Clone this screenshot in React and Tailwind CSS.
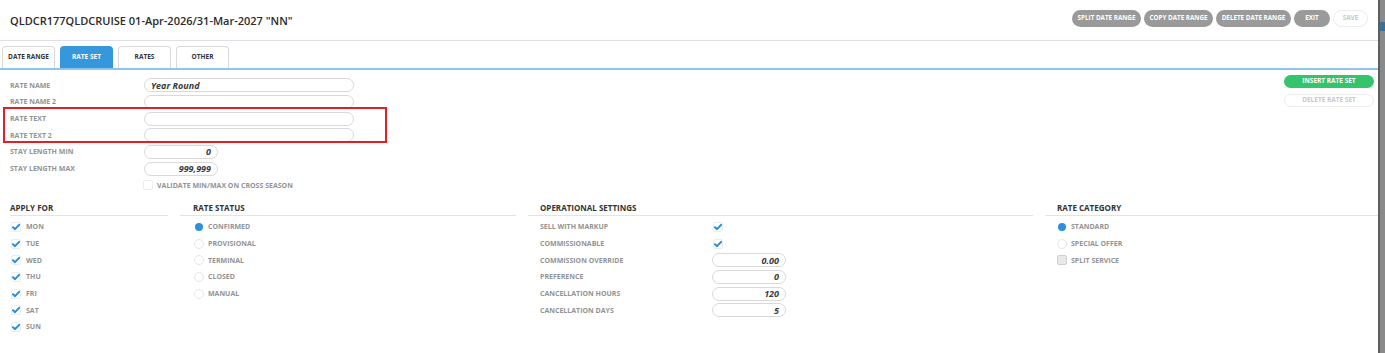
import React from 'react'

const font = { fontFamily: '"Open Sans", "Liberation Sans", sans-serif' }

const CheckMark = () => (
  <svg viewBox="0 0 10 10" className="w-[8px] h-[8px]">
    <path d="M1.3 5.4 L3.8 7.7 L8.9 2.3" fill="none" stroke="#2a8fdc" strokeWidth="2.6" strokeLinecap="round" strokeLinejoin="round" />
  </svg>
)

const Checkbox = ({ checked = false, filled = false }) => (
  <span
    className={`w-[10px] h-[10px] flex items-center justify-center rounded-[2px] border ${
      filled ? 'bg-[#e9e9e9] border-[#cfcfcf]' : 'bg-white border-[#ececec]'
    }`}
  >
    {checked && <CheckMark />}
  </span>
)

const Radio = ({ checked = false }) =>
  checked ? (
    <span className="w-[10px] h-[10px] flex items-center justify-center">
      <span className="block w-[8px] h-[8px] rounded-full bg-[#2d8fe0]" />
    </span>
  ) : (
    <span className="block w-[10px] h-[10px] rounded-full border border-[#e6e6e6] bg-white" />
  )

const Label = ({ children, className = '' }) => (
  <span className={`block text-[7px] font-bold text-[#939393] leading-none ${className}`}>{children}</span>
)

const Field = ({ value = '', align = 'left', width = 'w-[210px]' }) => (
  <div
    className={`${width} h-[14px] rounded-full border border-[#d9d9d9] bg-white flex items-center px-[6px] text-[9px] italic font-bold text-[#3a3a3a] leading-none ${
      align === 'right' ? 'justify-end' : 'justify-start'
    }`}
  >
    {value}
  </div>
)

const FormRow = ({ label, children }) => (
  <div className="h-[16.67px] flex items-center">
    <Label className="w-[134px]">{label}</Label>
    {children}
  </div>
)

const Section = ({ title, className = '', children }) => (
  <div className={`flex flex-col ${className}`}>
    <div className="h-[14px] flex items-center border-b border-[#e2e0f3]">
      <span className="text-[8px] font-bold text-[#333] leading-none">{title}</span>
    </div>
    <div className="pt-[3px] flex flex-col">{children}</div>
  </div>
)

const ListRow = ({ children }) => <div className="h-[16.67px] flex items-center">{children}</div>

const TopButton = ({ children, width, disabled = false }) => (
  <button
    className={`${width} h-[17px] rounded-full text-[6.3px] font-bold leading-none flex items-center justify-center ${
      disabled ? 'bg-white border border-[#ececec] text-[#c8c8c8]' : 'bg-[#9a9a9a] text-white'
    }`}
  >
    {children}
  </button>
)

const Tab = ({ children, active = false }) => (
  <div
    className={`w-[53px] h-[22px] rounded-t-[4px] flex items-center justify-center text-[6.5px] font-bold leading-none ${
      active ? 'bg-[#3597dc] text-white' : 'bg-white border border-b-0 border-[#d9d9d9] text-[#333]'
    }`}
  >
    {children}
  </div>
)

export default function App() {
  const days = ['MON', 'TUE', 'WED', 'THU', 'FRI', 'SAT', 'SUN']
  const statuses = ['CONFIRMED', 'PROVISIONAL', 'TERMINAL', 'CLOSED', 'MANUAL']
  const ops = [
    ['COMMISSION OVERRIDE', '0.00'],
    ['PREFERENCE', '0'],
    ['CANCELLATION HOURS', '120'],
    ['CANCELLATION DAYS', '5'],
  ]

  return (
    <div className="w-[1385px] h-[353px] flex bg-white overflow-hidden" style={font}>
      <div className="w-[1378px] h-full flex flex-col">
        {/* Header */}
        <div className="h-[41px] flex items-center justify-between pl-[10px] pr-[10px] border-b border-[#dfddf2]">
          <h1 className="text-[11px] font-semibold text-[#2b2b2b] leading-none">
            QLDCR177QLDCRUISE 01-Apr-2026/31-Mar-2027 "NN"
          </h1>
          <div className="flex items-center gap-[3px] -mt-[3px]">
            <TopButton width="w-[69px]">SPLIT DATE RANGE</TopButton>
            <TopButton width="w-[69px]">COPY DATE RANGE</TopButton>
            <TopButton width="w-[75px]">DELETE DATE RANGE</TopButton>
            <TopButton width="w-[36px]">EXIT</TopButton>
            <TopButton width="w-[35px]" disabled>SAVE</TopButton>
          </div>
        </div>

        {/* Tabs */}
        <div className="h-[29px] flex items-end gap-[5px] pl-[2px] border-b-2 border-[#8ec5ec]">
          <Tab>DATE RANGE</Tab>
          <Tab active>RATE SET</Tab>
          <Tab>RATES</Tab>
          <Tab>OTHER</Tab>
        </div>

        {/* Rate set form */}
        <div className="relative flex justify-between pl-[10px] pr-[4px] pt-[7px]">
          <div className="flex flex-col">
            <FormRow label="RATE NAME">
              <Field value="Year Round" />
            </FormRow>
            <FormRow label="RATE NAME 2">
              <Field />
            </FormRow>
            <FormRow label="RATE TEXT">
              <Field />
            </FormRow>
            <FormRow label="RATE TEXT 2">
              <Field />
            </FormRow>
            <FormRow label="STAY LENGTH MIN">
              <Field value="0" align="right" width="w-[74px]" />
            </FormRow>
            <FormRow label="STAY LENGTH MAX">
              <Field value="999,999" align="right" width="w-[74px]" />
            </FormRow>
            <div className="h-[16.67px] flex items-center pl-[133px] gap-[4px]">
              <Checkbox />
              <Label>VALIDATE MIN/MAX ON CROSS SEASON</Label>
            </div>
          </div>

          <div className="flex flex-col gap-[6px] -mt-[2px]">
            <button className="w-[90px] h-[13px] rounded-full bg-[#34c46c] text-white text-[6.5px] font-bold leading-none flex items-center justify-center">
              INSERT RATE SET
            </button>
            <button className="w-[90px] h-[13px] rounded-full bg-white border border-[#ececec] text-[#c8c8c8] text-[6.5px] font-bold leading-none flex items-center justify-center">
              DELETE RATE SET
            </button>
          </div>

          {/* annotation box */}
          <div className="absolute left-[3px] top-[37px] w-[384px] h-[36px] border-2 border-[#e31e26] pointer-events-none" />
        </div>

        {/* Sections */}
        <div className="flex pl-[10px] gap-[12px] mt-[8px]">
          <Section title="APPLY FOR" className="w-[158px]">
            {days.map((d) => (
              <ListRow key={d}>
                <span className="ml-[1px]">
                  <Checkbox checked />
                </span>
                <Label className="ml-[5px]">{d}</Label>
              </ListRow>
            ))}
          </Section>

          <Section title={<span className="pl-[13px]">RATE STATUS</span>} className="w-[336px]">
            {statuses.map((s, i) => (
              <ListRow key={s}>
                <span className="ml-[14px]">
                  <Radio checked={i === 0} />
                </span>
                <Label className="ml-[4px]">{s}</Label>
              </ListRow>
            ))}
          </Section>

          <Section title={<span className="pl-[12px]">OPERATIONAL SETTINGS</span>} className="w-[505px]">
            <ListRow>
              <Label className="w-[185px] pl-[12px]">SELL WITH MARKUP</Label>
              <Checkbox checked />
            </ListRow>
            <ListRow>
              <Label className="w-[185px] pl-[12px]">COMMISSIONABLE</Label>
              <Checkbox checked />
            </ListRow>
            {ops.map(([l, v]) => (
              <ListRow key={l}>
                <Label className="w-[184px] pl-[12px]">{l}</Label>
                <Field value={v} align="right" width="w-[74px]" />
              </ListRow>
            ))}
          </Section>

          <Section title={<span className="pl-[12px]">RATE CATEGORY</span>} className="w-[333px]">
            <ListRow>
              <span className="ml-[12px]">
                <Radio checked />
              </span>
              <Label className="ml-[4px]">STANDARD</Label>
            </ListRow>
            <ListRow>
              <span className="ml-[12px]">
                <Radio />
              </span>
              <Label className="ml-[4px]">SPECIAL OFFER</Label>
            </ListRow>
            <ListRow>
              <span className="ml-[12px]">
                <Checkbox filled />
              </span>
              <Label className="ml-[4px]">SPLIT SERVICE</Label>
            </ListRow>
          </Section>
        </div>
      </div>

      {/* background window edge */}
      <div className="flex-1 h-full bg-[#8a8a8a] border-l-2 border-[#5e5e5e] flex flex-col">
        <div className="h-[22px]" />
        <div className="h-[9px] bg-[#3d6f95]" />
      </div>
    </div>
  )
}
